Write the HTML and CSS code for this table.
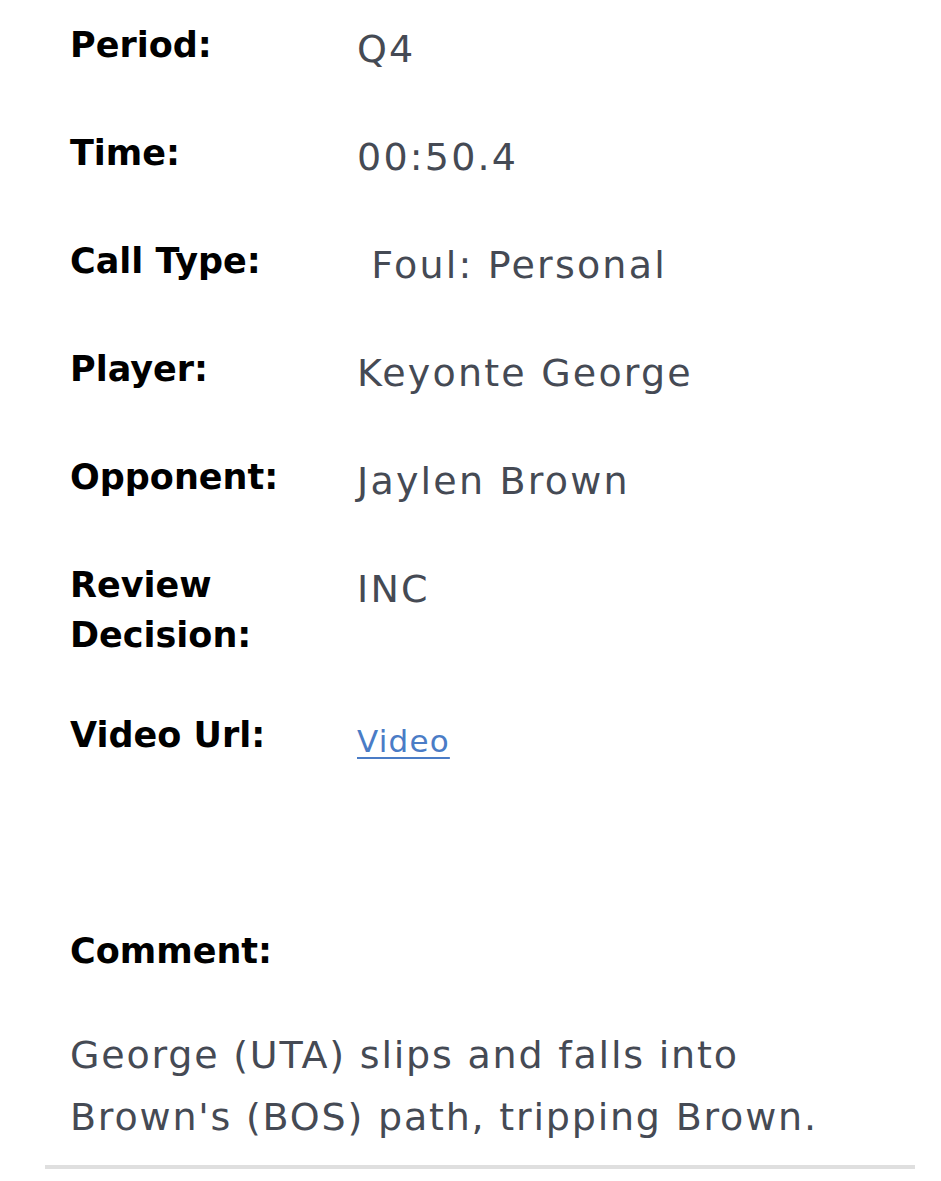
FILE: index.html
```html
<!DOCTYPE html>
<html>
<head>
<meta charset="utf-8">
<link rel="stylesheet" href="styles.css">
</head>
<body>
<div class="card">
  <dl class="details">
    <div class="row"><dt class="label">Period:</dt><dd class="value">Q4</dd></div>
    <div class="row"><dt class="label">Time:</dt><dd class="value">00:50.4</dd></div>
    <div class="row"><dt class="label">Call Type:</dt><dd class="value">&nbsp;Foul: Personal</dd></div>
    <div class="row"><dt class="label">Player:</dt><dd class="value">Keyonte George</dd></div>
    <div class="row"><dt class="label">Opponent:</dt><dd class="value">Jaylen Brown</dd></div>
    <div class="row"><dt class="label">Review<br>Decision:</dt><dd class="value">INC</dd></div>
    <div class="row"><dt class="label">Video Url:</dt><dd class="value"><a class="link" href="#">Video</a></dd></div>
  </dl>
  <section class="comment">
    <h3 class="label">Comment:</h3>
    <p class="comment-text">George (UTA) slips and falls into Brown's (BOS) path, tripping Brown.</p>
  </section>
  <hr class="divider">
</div>
</body>
</html>
```
FILE: styles.css
```css
html, body {
  margin: 0;
  padding: 0;
  background: #ffffff;
}
.card {
  padding: 20px 26px 0 45px;
  font-family: "DejaVu Sans", sans-serif;
}
.details {
  margin: 0;
  padding: 0 0 0 25px;
}
.row {
  display: grid;
  grid-template-columns: 287px 1fr;
  align-items: start;
  margin-bottom: 50px;
}
.label {
  margin: 0;
  font-size: 35px;
  font-weight: 700;
  line-height: 50px;
  color: #000;
}
.value {
  margin: 0;
  font-size: 38px;
  letter-spacing: 2.2px;
  line-height: 58px;
  color: #454a54;
}
.link {
  font-size: 31px;
  letter-spacing: 1.2px;
  color: #4a7cc6;
  text-decoration: underline;
  text-decoration-thickness: 2px;
  text-underline-offset: 5px;
}
.comment {
  padding: 106px 0 0 25px;
}
.comment h3 {
  margin: 0;
}
.comment-text {
  margin: 48px 0 0;
  font-size: 38px;
  letter-spacing: 1.8px;
  line-height: 62px;
  color: #454a54;
  max-width: 775px;
}
.divider {
  margin: 17px 0 0;
  border: 0;
  height: 4px;
  background: #dfdfdf;
}
```
